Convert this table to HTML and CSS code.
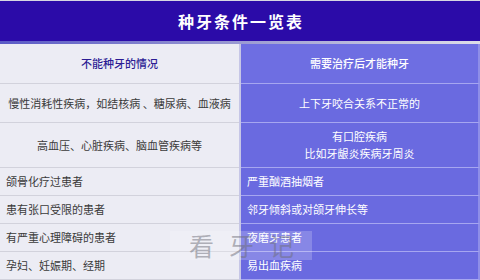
FILE: index.html
```html
<!DOCTYPE html>
<html lang="zh">
<head>
<meta charset="utf-8">
<link rel="stylesheet" href="styles.css">
</head>
<body>
<div class="page">
  <div class="title">种牙条件一览表</div>
  <div class="strip"></div>
  <div class="table">
    <div class="cell l head h-head">不能种牙的情况</div>
    <div class="cell r head h-head">需要治疗后才能种牙</div>

    <div class="cell l center h-r1">慢性消耗性疾病，如结核病 、糖尿病、血液病</div>
    <div class="cell r center h-r1">上下牙咬合关系不正常的</div>

    <div class="cell l center h-r2">高血压、心脏疾病、脑血管疾病等</div>
    <div class="cell r center h-r2 two">有口腔疾病<br>比如牙龈炎疾病牙周炎</div>

    <div class="cell l h-r">颌骨化疗过患者</div>
    <div class="cell r h-r">严重酗酒抽烟者</div>

    <div class="cell l h-r">患有张口受限的患者</div>
    <div class="cell r h-r">邻牙倾斜或对颌牙伸长等</div>

    <div class="cell l h-r">有严重心理障碍的患者</div>
    <div class="cell r h-r">夜磨牙患者</div>

    <div class="cell l h-r">孕妇、妊娠期、经期</div>
    <div class="cell r h-r">易出血疾病</div>
  </div>
  <div class="watermark">看牙记</div>
</div>
</body>
</html>
```

FILE: styles.css
```css
* { box-sizing: border-box; }
html, body {
  margin: 0;
  padding: 0;
  width: 480px;
  height: 280px;
  overflow: hidden;
  background: #ffffff;
  font-family: "Noto Sans CJK SC", "Noto Sans", sans-serif;
}
.page {
  position: relative;
  width: 480px;
  height: 280px;
  border-top: 1px solid #d6d6e2;
}
.title {
  height: 40px;
  background: #2b0ba8;
  color: #ffffff;
  font-size: 16px;
  font-weight: 700;
  letter-spacing: 2px;
  display: flex;
  align-items: center;
  justify-content: center;
  padding-left: 2px;
}
.strip {
  height: 3px;
  background: linear-gradient(to right, #5a5ac6, #9a9ad2 50%, #dcdce8);
}
.table {
  display: grid;
  grid-template-columns: 239px 239px;
  column-gap: 2px;
  background: #c6c6e6;
}
.cell {
  display: flex;
  align-items: center;
  font-size: 11px;
  line-height: 17px;
  padding-left: 6px;
}
.cell.l {
  background: #ececf4;
  color: #3a3a3a;
  border-bottom: 1px solid #d2d2dc;
}
.cell.r {
  background: #6a6ae0;
  color: #ffffff;
  border-bottom: 1px solid #a6a6f0;
  border-right: 2px solid #8e8ee8;
}
.center {
  justify-content: center;
  text-align: center;
  padding-left: 0;
}
.head {
  justify-content: center;
  padding-left: 0;
  font-weight: 500;
}
.cell.l.head { color: #2c1c94; }
.cell.r.head { background: #6e6ee2; }
.h-head { height: 40px; }
.h-r1 { height: 39px; }
.h-r2 { height: 45px; }
.h-r { height: 28px; }
.two { line-height: 17px; }
.watermark {
  position: absolute;
  left: 170px;
  top: 230px;
  width: 142px;
  height: 29px;
  background: rgba(255, 255, 255, 0.2);
  color: rgba(110, 110, 120, 0.5);
  font-size: 25px;
  line-height: 29px;
  letter-spacing: 15px;
  padding-left: 19px;
  white-space: nowrap;
  font-family: "Noto Sans CJK SC", sans-serif;
}
```
